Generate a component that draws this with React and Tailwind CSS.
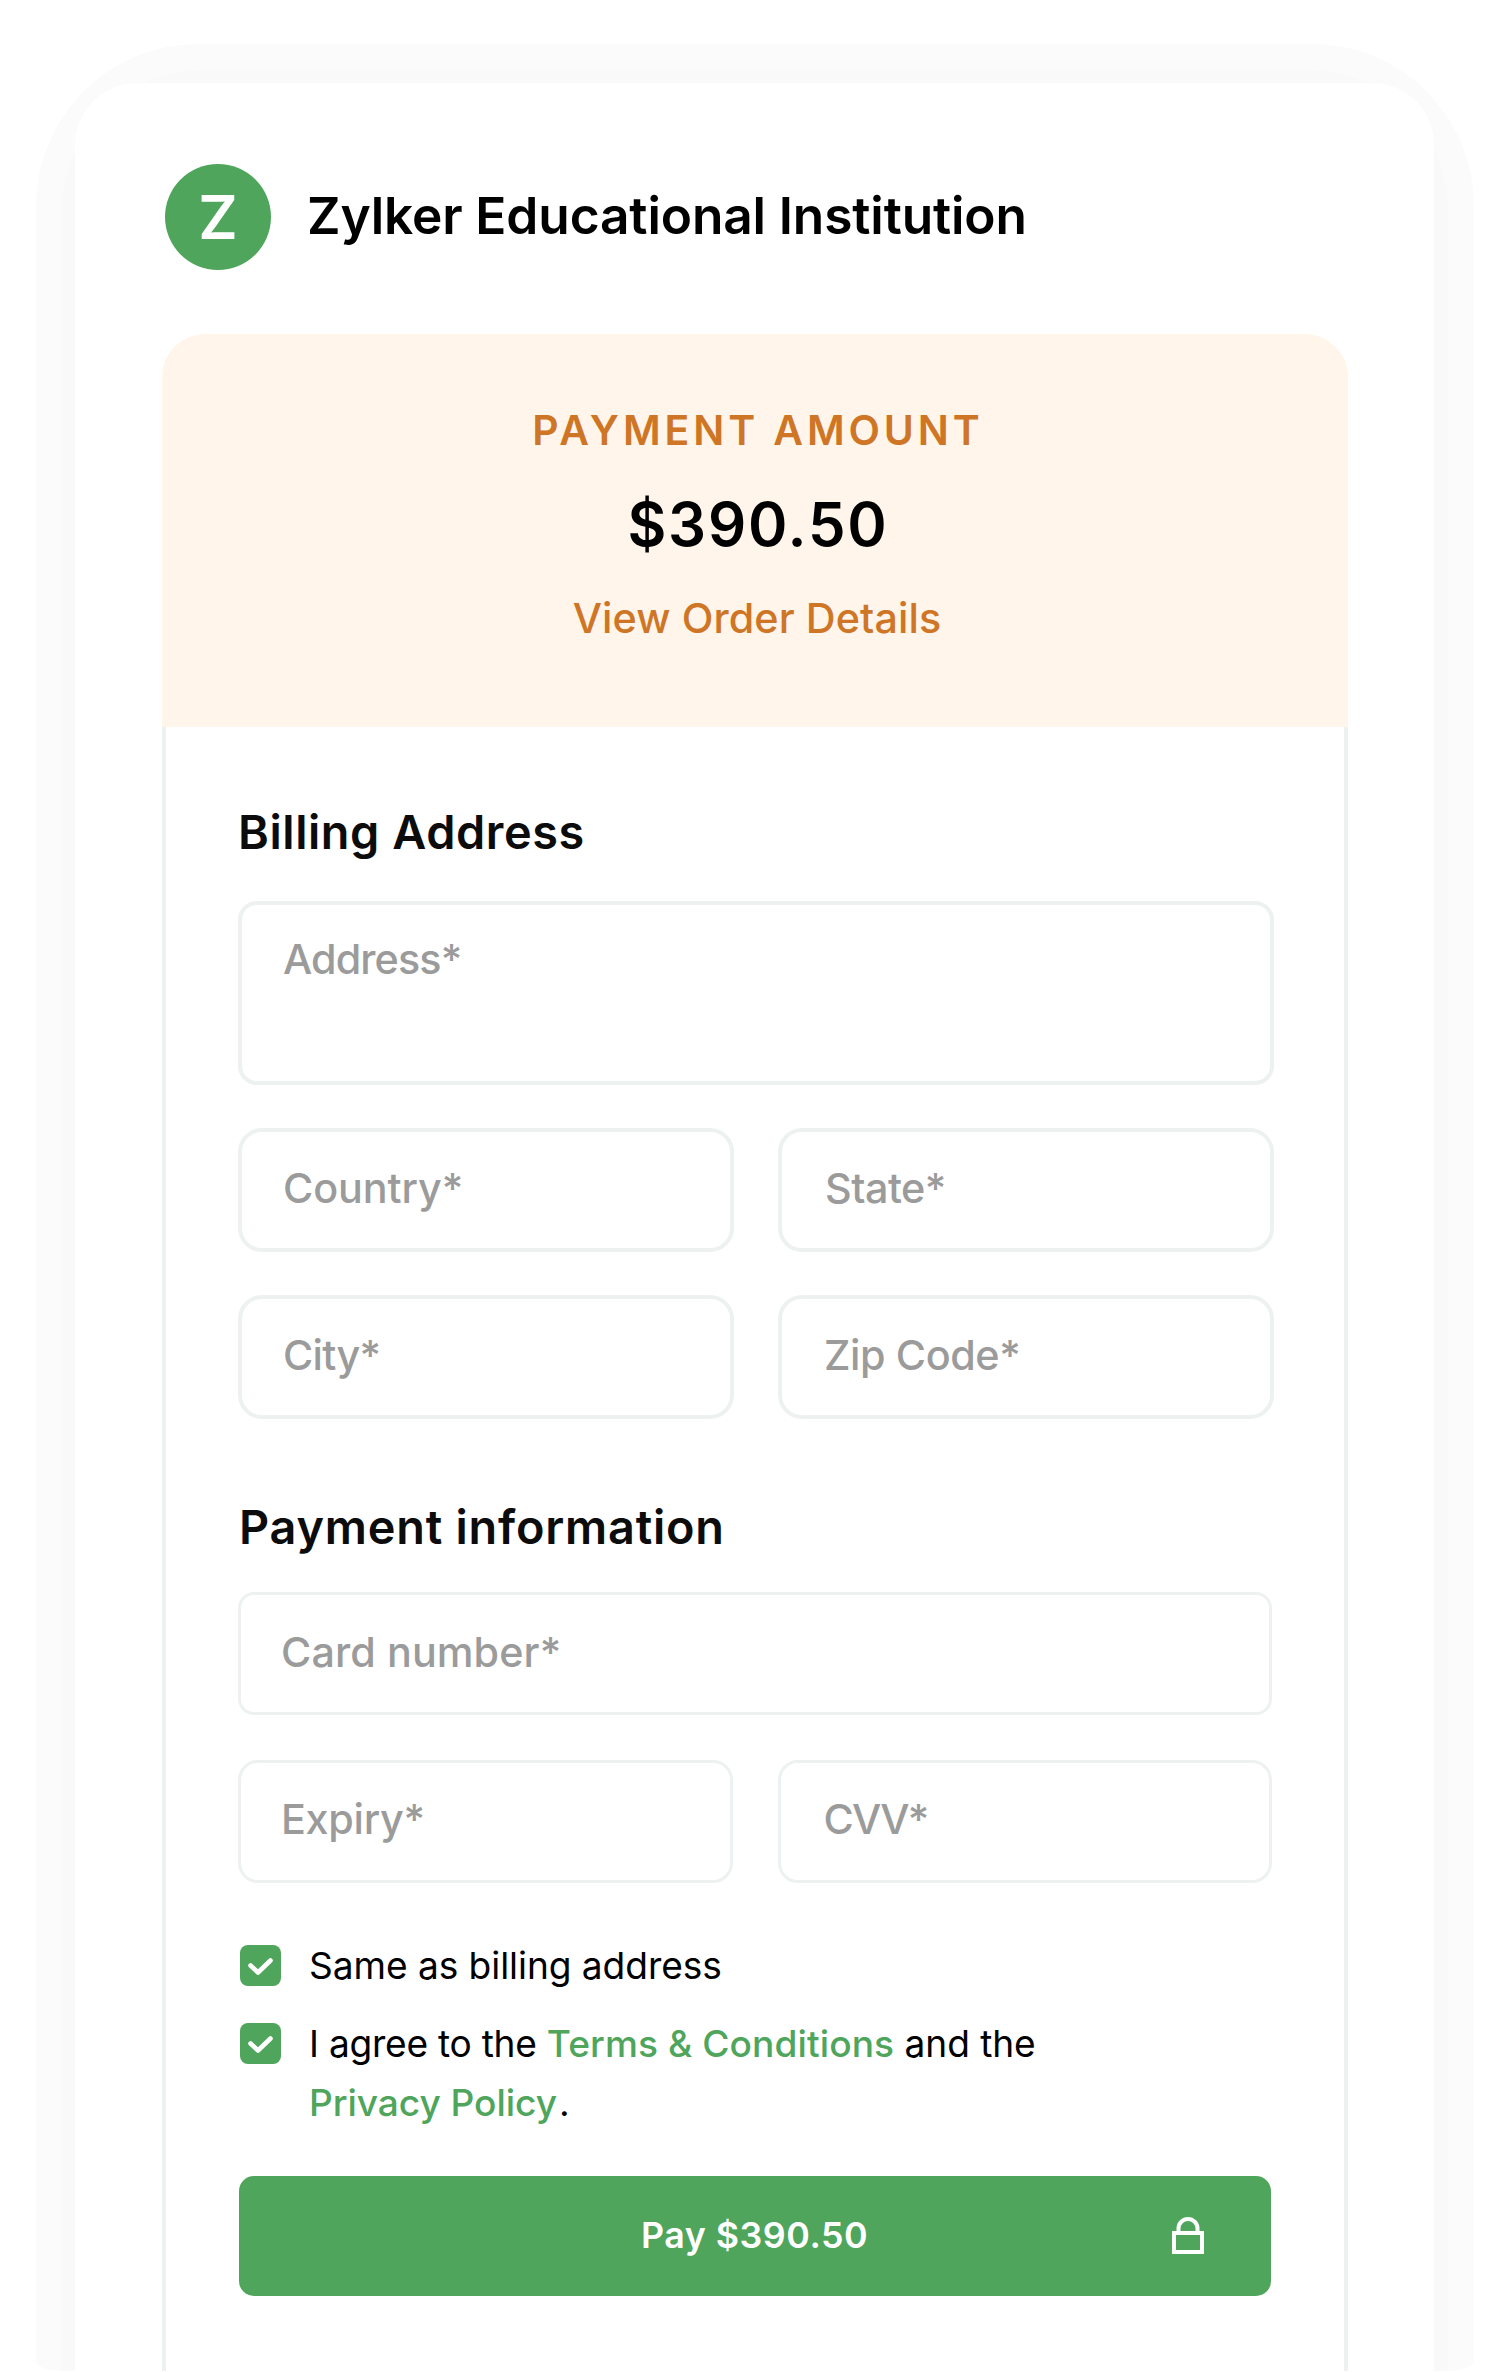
import React from "react";

function Field({ label, className }) {
  return (
    <div className={`flex items-center border-[#edf1ef] pb-1 text-[41.3px] font-medium leading-[50px] text-[#9b9b9b] ${className}`}>
      {label}
    </div>
  );
}

function Checkbox() {
  return (
    <span className="mt-[9px] flex size-[41px] shrink-0 items-center justify-center rounded-lg bg-[#4ea55b]">
      <svg width="41" height="41" viewBox="0 0 41 41" fill="none">
        <path d="M10.5 20.5 L18 27.5 L30.5 15.5" stroke="#fff" strokeWidth="4.6" strokeLinecap="round" strokeLinejoin="round" />
      </svg>
    </span>
  );
}

function LockIcon() {
  return (
    <svg width="32" height="37" viewBox="0 0 32 37" fill="none" stroke="#fff" strokeWidth="4">
      <rect x="2" y="16" width="28" height="19" />
      <path d="M6.5 16 V11.5 a9.5 9.5 0 0 1 19 0 V16" />
    </svg>
  );
}

export default function App() {
  return (
    <div className="h-[2372px] w-[1509px] overflow-hidden bg-white pl-9 pt-11 font-['Inter',sans-serif] text-black">
      <div className="h-[2327px] w-[1437.5px] overflow-hidden rounded-t-[162px] rounded-b-[26px_10px] bg-[#fbfbfb] pl-[26px] pt-[26px]">
        <div className="h-[2301px] w-[1386px] rounded-t-[140px] bg-[#f9f9f9] pl-[13px] pt-[13px]">
          <div className="h-[2288px] w-[1359px] rounded-t-[62px] bg-white pl-[87px] pt-[81px]">
            <header className="flex h-[106.5px] items-center pl-[3px]">
              <div className="flex size-[106px] items-center justify-center rounded-full bg-[#4ea55b] pb-px text-[60.5px] font-semibold leading-none text-white">
                Z
              </div>
              <h1 className="ml-[36px] pb-1 text-[51.4px] font-semibold leading-[60px] tracking-[-0.12px]">
                Zylker Educational Institution
              </h1>
            </header>

            <main className="mt-[63.5px] w-[1186px]">
              <section className="flex h-[393px] flex-col items-center rounded-t-[43px] bg-[#fff5ea] pl-1 pt-[71px]">
                <p className="pl-0.5 text-[40.9px] font-semibold leading-[50px] tracking-[3.9px] text-[#cf7526]">PAYMENT AMOUNT</p>
                <p className="mt-[34px] pl-0.5 text-[59.8px] font-semibold leading-[70px] tracking-[1.8px]">$390.50</p>
                <a className="mt-[34px] text-[41.3px] font-medium leading-[50px] tracking-[0.1px] text-[#cf7526]">View Order Details</a>
              </section>

              <section className="h-[1645px] border-x-[4px] border-[#edf1ef] pl-[72px] pt-[77px]">
                <h2 className="text-[46.8px] font-semibold leading-[56px] tracking-[0.6px] text-[#0c0c0c]">Billing Address</h2>
                <div className="mt-[41px] w-[1036px]">
                  <Field label="Address*" className="h-[184px] !items-start rounded-[19px] border-4 pl-[41px] pt-[29px] tracking-[-0.9px]" />
                  <div className="mt-[43px] grid grid-cols-2 gap-x-11 gap-y-[43px]">
                    <Field label="Country*" className="h-[124px] rounded-3xl border-4 pl-[41px] tracking-[-0.1px]" />
                    <Field label="State*" className="h-[124px] rounded-3xl border-4 pl-[43px] tracking-[-0.5px]" />
                    <Field label="City*" className="h-[124px] rounded-3xl border-4 pl-[41px] tracking-[-0.7px]" />
                    <Field label="Zip Code*" className="h-[124px] rounded-3xl border-4 pl-[42px] tracking-[-0.4px]" />
                  </div>
                </div>

                <h2 className="mt-[80px] pl-px text-[46.8px] font-semibold leading-[56px] tracking-[0.8px] text-[#0c0c0c]">Payment information</h2>
                <div className="mt-[37px] w-[1034px]">
                  <Field label="Card number*" className="h-[123px] rounded-2xl border-[3px] pl-[40px] tracking-[0.1px]" />
                  <div className="mt-[45px] grid grid-cols-2 gap-x-[45px]">
                    <Field label="Expiry*" className="h-[123px] rounded-[20px] border-[3px] pb-1.5 pl-[40px] tracking-[-0.3px]" />
                    <Field label="CVV*" className="h-[123px] rounded-[20px] border-[3px] pb-1.5 pl-[43px] tracking-[-1.7px]" />
                  </div>
                </div>

                <div className="mt-[53px] w-[1033px] pl-0.5 text-[37.1px] leading-[59px] tracking-[-0.05px]">
                  <div className="flex items-start gap-[28px]">
                    <Checkbox />
                    <span>Same as billing address</span>
                  </div>
                  <div className="mt-[19px] flex items-start gap-[28px]">
                    <Checkbox />
                    <span>
                      <span className="tracking-[-0.25px]">I agree to the </span>
                      <a className="font-medium tracking-[0.1px] text-[#4ea55b]">Terms &amp; Conditions</a> and the
                      <br />
                      <a className="font-medium text-[#4ea55b]">Privacy Policy</a>
                      <span className="pl-0.5">.</span>
                    </span>
                  </div>
                </div>

                <button className="ml-px mt-[44px] flex h-[119.5px] w-[1032px] items-center rounded-[15px] bg-[#4ea55b] pl-[402px] pr-[67px] text-[35.8px] font-semibold leading-[44px] tracking-[0.5px] text-white">
                  <span className="pb-0.5">Pay $390.50</span>
                  <span className="ml-auto">
                    <LockIcon />
                  </span>
                </button>
              </section>
            </main>
          </div>
        </div>
      </div>
    </div>
  );
}
